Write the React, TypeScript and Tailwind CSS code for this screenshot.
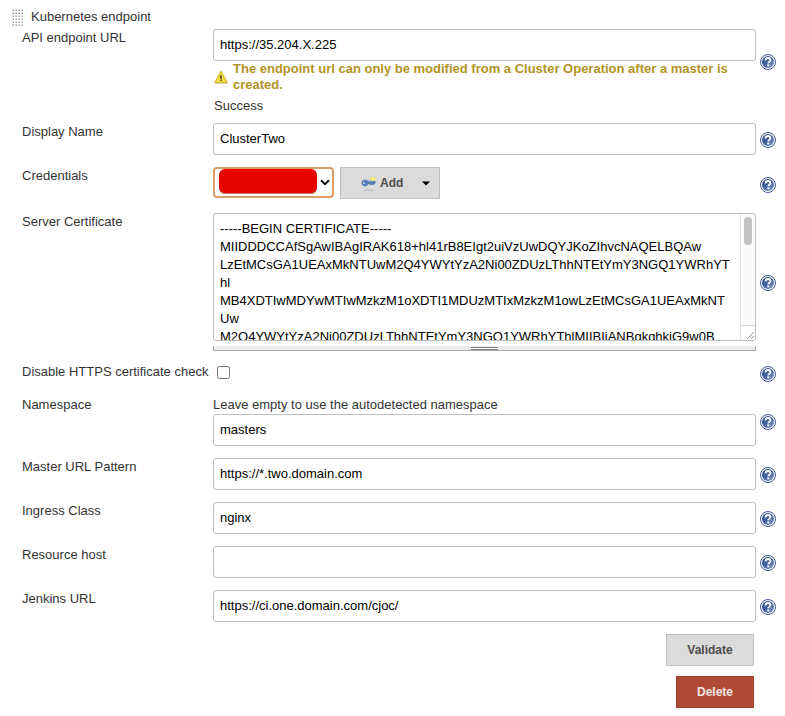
import type { ReactNode } from "react";

function HelpIcon() {
  return (
    <svg width="16" height="16" viewBox="0 0 16 16" className="block">
      <defs>
        <linearGradient id="helpFill" x1="0" y1="0" x2="1" y2="1">
          <stop offset="0" stopColor="#274684" />
          <stop offset="0.5" stopColor="#46649f" />
          <stop offset="1" stopColor="#8ba4cf" />
        </linearGradient>
      </defs>
      <circle cx="8" cy="8" r="7.5" fill="#fff" stroke="#3f5b95" strokeWidth="1" />
      <circle cx="8" cy="8" r="6" fill="url(#helpFill)" />
      <path d="M5.5 6.400C5.500 4.700 6.500 4 8 4s2.400.8 2.400 2.100c0 1.500-2.100 1.700-2.100 3.200" fill="none" stroke="#fff" strokeWidth="1.800" />
      <rect x="7.300" y="10.400" width="2" height="1.900" fill="#fff" />
    </svg>
  );
}

function WarningIcon() {
  return (
    <svg width="14" height="14" viewBox="0 0 14 14" className="block">
      <path d="M7 1.200 13.200 12.600H.8Z" fill="#f3dc3c" stroke="#d8bd35" strokeWidth="1.200" strokeLinejoin="round" />
      <path d="M.8 13.200h12.400" stroke="#b9a76a" strokeWidth="0.600" />
      <path d="M6 5.400H8L7.600 8.900H6.400Z" fill="#4d4a2c" />
      <rect x="6.200" y="9.500" width="1.600" height="1.400" fill="#4d4a2c" />
    </svg>
  );
}

function KeyIcon() {
  return (
    <svg width="16" height="16" viewBox="0 0 16 16" className="block">
      <ellipse cx="8" cy="15.200" rx="6" ry="0.700" fill="#c0c0c0" />
      <circle cx="12" cy="4.500" r="2.400" fill="#f4ec5c" />
      <circle cx="12" cy="4.300" r="1" fill="#fcf9b4" />
      <path
        d="M3.800 4.900c1.600 0 2.600.5 3.200 1.300h6.800l1 1-1 1.300h-.9v1.200h-1.400V8.800h-1.100v1H9V8.800H7.200c-.6 1.300-1.600 2.300-3.300 2.300C2 11.100.8 9.800.8 8S2 4.900 3.800 4.900Z"
        fill="#5279b9"
        stroke="#41669f"
        strokeWidth="0.500"
      />
      <ellipse cx="2.700" cy="8" rx="0.900" ry="1" fill="#d8dce4" />
      <path d="M3.500 5.800h2M7.500 6.900h6" stroke="#86a5d5" strokeWidth="0.700" />
    </svg>
  );
}

function Grip() {
  const rows = [0, 3, 6, 9, 12, 15];
  const cols = [0, 3, 6, 9];
  return (
    <svg width="12" height="18" viewBox="0 0 12 18" className="block">
      {rows.map((y) =>
        cols.map((x) => (
          <g key={`${x}-${y}`}>
            <rect x={x} y={y} width="2" height="2" fill="#d8d8d5" />
            <rect x={x + 1} y={y + 1} width="1" height="1" fill="#969696" />
          </g>
        )),
      )}
    </svg>
  );
}

type RowProps = { label: string; height: string; help: string; children: ReactNode };

function Row({ label, height, help, children }: RowProps) {
  return (
    <div className={`flex shrink-0 pl-[22px] ${height}`}>
      <div className="w-[191px] shrink-0 whitespace-nowrap pt-px">{label}</div>
      <div className="w-[543px] shrink-0">{children}</div>
      <div className={`ml-1 ${help}`}>
        <HelpIcon />
      </div>
    </div>
  );
}

function TextInput({ value }: { value: string }) {
  return (
    <input
      type="text"
      defaultValue={value}
      className="block h-8 w-full rounded-[3px] border border-[#bfbfbf] bg-white px-1.5 pb-0.5 text-[13px] text-black outline-none"
    />
  );
}

const certificate = [
  "-----BEGIN CERTIFICATE-----",
  "MIIDDDCCAfSgAwIBAgIRAK618+hl41rB8EIgt2uiVzUwDQYJKoZIhvcNAQELBQAw",
  "LzEtMCsGA1UEAxMkNTUwM2Q4YWYtYzA2Ni00ZDUzLThhNTEtYmY3NGQ1YWRhYT",
  "hl",
  "MB4XDTIwMDYwMTIwMzkzM1oXDTI1MDUzMTIxMzkzM1owLzEtMCsGA1UEAxMkNT",
  "Uw",
  "M2Q4YWYtYzA2Ni00ZDUzLThhNTEtYmY3NGQ1YWRhYThlMIIBIjANBgkqhkiG9w0B",
];

function CertificateArea() {
  return (
    <>
      <div className="flex h-32 overflow-hidden rounded-[3px] border border-[#bfbfbf] bg-white">
        <div className="min-w-0 flex-1 overflow-hidden whitespace-nowrap pl-1.5 pt-1.5 leading-[18px] text-black">
          {certificate.map((line) => (
            <div key={line}>{line}</div>
          ))}
        </div>
        <div className="flex w-[15px] shrink-0 flex-col border-l border-[#e4e4e4] bg-[#fafafa]">
          <div className="ml-[3px] mt-[3px] h-7 w-2 rounded-full bg-[#c1c1c1]" />
          <div className="mt-auto h-[15px] border-t border-[#d5d5d5] bg-white">
            <svg width="14" height="14" viewBox="0 0 14 14" className="block">
              <path d="M6 13 13 6M10 13l3-3" stroke="#777" strokeWidth="0.8" />
            </svg>
          </div>
        </div>
      </div>
      <div className="mt-[5px] flex h-[5px] justify-center border-b border-l border-r border-[#aaa] bg-[#ebebeb]">
        <div className="mt-px h-[3px] w-[27px] border-y border-[#7d7d78] bg-white" />
      </div>
    </>
  );
}

export default function App() {
  return (
    <div className="flex h-[716px] w-[785px] flex-col overflow-hidden bg-white font-['Liberation_Sans',Arial,sans-serif] text-[13px] leading-4 text-[#333]">
      <div className="flex h-[29px] shrink-0 gap-[7px] pl-3 pt-[9px]">
        <Grip />
        <div>Kubernetes endpoint</div>
      </div>

      <Row label="API endpoint URL" height="h-[94px]" help="pt-[25px]">
        <TextInput value="https://35.204.X.225" />
        <div className="flex h-8 pl-px">
          <div className="w-[19px] shrink-0 pt-[9px]">
            <WarningIcon />
          </div>
          <div className="font-bold text-[#b29425]">
            The endpoint url can only be modified from a Cluster Operation after a master is
            <br />
            created.
          </div>
        </div>
        <div className="mt-[5px] pl-px">Success</div>
      </Row>

      <Row label="Display Name" height="h-11" help="pt-[9px]">
        <TextInput value="ClusterTwo" />
      </Row>

      <Row label="Credentials" height="h-[46px]" help="pt-[10px]">
        <div className="flex gap-1.5">
          <button className="flex h-[31px] w-[121px] items-center rounded-[4px] border-2 border-[#df9c66] bg-white pl-1">
            <span className="mb-0.5 h-[25px] w-[98px] rounded-[6px] border-b border-[#b97878] bg-[#e60400]" />
            <svg width="10" height="7" viewBox="0 0 10 7" className="ml-[3px]">
              <path d="M1 1.200 5 5.200 9 1.200" fill="none" stroke="#111" strokeWidth="2" />
            </svg>
          </button>
          <button className="flex h-8 w-[100px] items-center border border-[#c0c0c0] bg-[#dbdbdb] pl-5 text-xs font-bold text-[#4d4d4d]">
            <KeyIcon />
            <span className="ml-[3px]">Add</span>
            <svg width="8" height="5" viewBox="0 0 8 5" className="ml-[19px]">
              <path d="M0 .5h8L4 4.500Z" fill="#000" />
            </svg>
          </button>
        </div>
      </Row>

      <Row label="Server Certificate" height="h-[150px]" help="pt-[62px]">
        <CertificateArea />
      </Row>

      <Row label="Disable HTTPS certificate check" height="h-[33px]" help="pt-[3px]">
        <input
          type="checkbox"
          className="ml-1 mt-[3px] block h-[13px] w-[13px] appearance-none rounded-[2.5px] border border-[#767676] bg-white"
        />
      </Row>

      <Row label="Namespace" height="h-[62px]" help="pt-[18px]">
        <div className="h-[18px] pt-px">Leave empty to use the autodetected namespace</div>
        <TextInput value="masters" />
      </Row>

      <Row label="Master URL Pattern" height="h-11" help="pt-[9px]">
        <TextInput value="https://*.two.domain.com" />
      </Row>
      <Row label="Ingress Class" height="h-11" help="pt-[9px]">
        <TextInput value="nginx" />
      </Row>
      <Row label="Resource host" height="h-11" help="pt-[9px]">
        <TextInput value="" />
      </Row>
      <Row label="Jenkins URL" height="h-11" help="pt-[9px]">
        <TextInput value="https://ci.one.domain.com/cjoc/" />
      </Row>

      <div className="flex flex-col items-end gap-2.5 pr-[31px] text-xs font-bold">
        <button className="h-8 w-[88px] border border-[#c0c0c0] bg-[#dbdbdb] text-[#4d4d4d]">Validate</button>
        <button className="h-8 w-[78px] border border-[#9f3f2b] bg-[#b04a35] text-[#f0e4e1]">Delete</button>
      </div>
    </div>
  );
}
